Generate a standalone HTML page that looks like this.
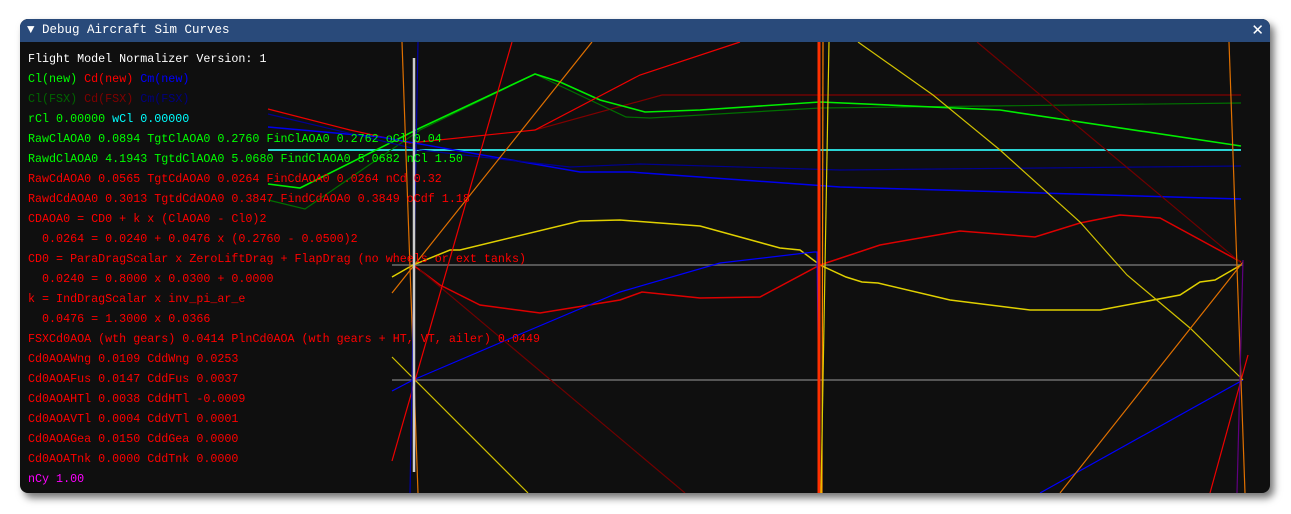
<!DOCTYPE html>
<html><head><meta charset="utf-8"><style>
body{margin:0;width:1291px;height:514px;background:#fff;overflow:hidden;position:relative;font-family:"Liberation Mono",monospace}
.win{position:absolute;left:20px;top:19px;width:1250px;height:474px;background:#0f0f0f;border-radius:8px;box-shadow:4px 5px 8px rgba(0,0,0,.55);overflow:hidden}
.tb{position:absolute;left:0;top:0;width:100%;height:23px;background:#294a7a;color:#fff;font-size:12.5px;line-height:23px}
.tb .t{position:absolute;left:7px}
.tb .x{position:absolute;right:6px;top:0;font-family:"DejaVu Sans",sans-serif;font-size:15px}
svg{position:absolute;left:0;top:0}
.txt{position:absolute;left:8px;top:30px;font-size:11.7px;line-height:20px;white-space:pre}
.w{color:#fff}.g{color:#00ff00}.r{color:#ff0000}.b{color:#0000ff}.dg{color:#006600}.dr{color:#800000}.db{color:#000080}.c{color:#00ffff}.m{color:#ff00ff}
</style></head><body>
<div class="win">
<svg width="1250" height="474" viewBox="20 19 1250 474" fill="none" stroke-width="1.2">
<line x1="392" y1="265" x2="1243" y2="265" stroke="#555" stroke-width="2"/>
<line x1="392" y1="380" x2="1243" y2="380" stroke="#555" stroke-width="2"/>
<line x1="268" y1="150" x2="1241" y2="150" stroke="#2ad4d4" stroke-width="2"/>
<polyline points="535,130 662,95 1241,95" stroke="#800000"/>
<polyline points="268,200 305,209 420,130 535,74 626,117 650,118 820,108 1241,103" stroke="#007000"/>
<polyline points="268,184 300,188 420,128 535,74 560,82 600,100 645,112 700,110 820,102 1000,110 1241,146" stroke="#00ee00" stroke-width="1.6"/>
<polyline points="268,109 350,130 410,143 535,130 640,75 740,42" stroke="#ee0000"/>
<polyline points="268,127 380,137 580,172 630,172 840,187 1241,199" stroke="#0000ee" stroke-width="1.5"/>
<polyline points="268,114 420,150 570,167 640,164 840,170 1241,166" stroke="#000090"/>
<polyline points="392,277 413,265 450,250 460,250 580,221 620,220 700,226 780,248 800,250 820,265 846,277 862,282 878,283 950,300 1030,310 1100,310 1180,295 1200,282 1215,280 1241,265" stroke="#e0d000" stroke-width="1.5"/>
<polyline points="413,265 440,285 480,305 540,313 620,300 642,292 700,298 760,297 820,265 880,245 960,231 1035,237 1080,223 1120,215 1160,218 1241,262" stroke="#dd0000" stroke-width="1.5"/>
<polyline points="392,391 413,380 530,330 620,292 720,263 814,252 817,252 820,493" stroke="#0000ff"/>
<line x1="1040" y1="493" x2="1243" y2="380" stroke="#0000ff"/>
<line x1="420" y1="270" x2="685" y2="493" stroke="#700000"/>
<line x1="977" y1="42" x2="1240" y2="262" stroke="#700000"/>
<line x1="392" y1="357" x2="528" y2="493" stroke="#d0c000"/>
<polyline points="858,42 933,95 1000,150 1080,222 1127,275 1190,328 1243,380" stroke="#d0c000"/>
<line x1="392" y1="461" x2="512" y2="42" stroke="#ee0000"/>
<line x1="1210" y1="493" x2="1248" y2="355" stroke="#ee0000"/>
<line x1="392" y1="293" x2="592" y2="42" stroke="#e07000"/>
<line x1="1060" y1="493" x2="1243" y2="262" stroke="#e07000"/>
<line x1="402" y1="42" x2="418" y2="493" stroke="#e07000"/>
<line x1="1229" y1="42" x2="1245" y2="493" stroke="#e07000"/>
<line x1="418" y1="42" x2="410" y2="493" stroke="#0000aa"/>
<line x1="819" y1="42" x2="819" y2="493" stroke="#ff3000" stroke-width="3"/>
<line x1="823" y1="42" x2="822" y2="493" stroke="#ff8000"/>
<line x1="829" y1="42" x2="821" y2="493" stroke="#e0d000"/>
<line x1="1243" y1="260" x2="1237" y2="493" stroke="#600080"/>
<line x1="414" y1="58" x2="414" y2="472" stroke="#ccc" stroke-width="2.5"/>
</svg>
<div class="tb"><span class="t">▼ Debug Aircraft Sim Curves</span><span class="x">✕</span></div>
<div class="txt"><span class="w">Flight Model Normalizer Version: 1</span>
<span class="g">Cl(new)</span> <span class="r">Cd(new)</span> <span class="b">Cm(new)</span>
<span class="dg">Cl(FSX)</span> <span class="dr">Cd(FSX)</span> <span class="db">Cm(FSX)</span>
<span class="g">rCl 0.00000</span> <span class="c">wCl 0.00000</span>
<span class="g">RawClAOA0 0.0894 TgtClAOA0 0.2760 FinClAOA0 0.2762 oCl 0.04</span>
<span class="g">RawdClAOA0 4.1943 TgtdClAOA0 5.0680 FindClAOA0 5.0682 nCl 1.50</span>
<span class="r">RawCdAOA0 0.0565 TgtCdAOA0 0.0264 FinCdAOA0 0.0264 nCd 0.32</span>
<span class="r">RawdCdAOA0 0.3013 TgtdCdAOA0 0.3847 FindCdAOA0 0.3849 oCdf 1.18</span>
<span class="r">CDAOA0 = CD0 + k x (ClAOA0 - Cl0)2</span>
<span class="r">  0.0264 = 0.0240 + 0.0476 x (0.2760 - 0.0500)2</span>
<span class="r">CD0 = ParaDragScalar x ZeroLiftDrag + FlapDrag (no wheels or ext tanks)</span>
<span class="r">  0.0240 = 0.8000 x 0.0300 + 0.0000</span>
<span class="r">k = IndDragScalar x inv_pi_ar_e</span>
<span class="r">  0.0476 = 1.3000 x 0.0366</span>
<span class="r">FSXCd0AOA (wth gears) 0.0414 PlnCd0AOA (wth gears + HT, VT, ailer) 0.0449</span>
<span class="r">Cd0AOAWng 0.0109 CddWng 0.0253</span>
<span class="r">Cd0AOAFus 0.0147 CddFus 0.0037</span>
<span class="r">Cd0AOAHTl 0.0038 CddHTl -0.0009</span>
<span class="r">Cd0AOAVTl 0.0004 CddVTl 0.0001</span>
<span class="r">Cd0AOAGea 0.0150 CddGea 0.0000</span>
<span class="r">Cd0AOATnk 0.0000 CddTnk 0.0000</span>
<span class="m">nCy 1.00</span></div>
</div>
</body></html>
